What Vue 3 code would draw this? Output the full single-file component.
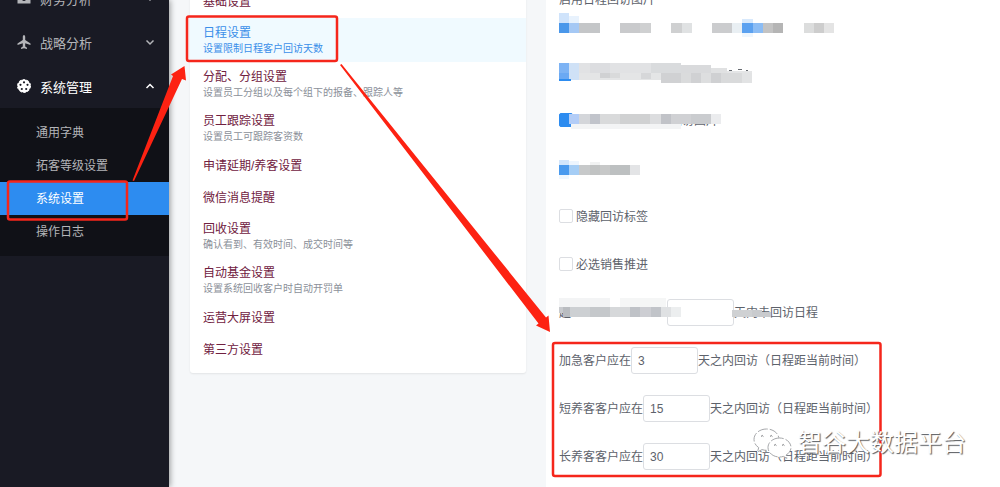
<script setup>
import { ref } from 'vue'

const subMenu = ['通用字典', '拓客等级设置', '系统设置', '操作日志']
const activeSub = ref('系统设置')

const settings = [
  { title: '基础设置' },
  { title: '日程设置', desc: '设置限制日程客户回访天数' },
  { title: '分配、分组设置', desc: '设置员工分组以及每个组下的报备、跟踪人等' },
  { title: '员工跟踪设置', desc: '设置员工可跟踪客资数' },
  { title: '申请延期/养客设置' },
  { title: '微信消息提醒' },
  { title: '回收设置', desc: '确认看到、有效时间、成交时间等' },
  { title: '自动基金设置', desc: '设置系统回收客户时自动开罚单' },
  { title: '运营大屏设置' },
  { title: '第三方设置' }
]
const activeSetting = ref('日程设置')

// Mosaic tiles: x, y, width, height, colour, relative to their row
const tilesA = [
  [0, 13, 10, 10, '#cfe3fb'], [10, 16, 10, 7, '#e8f2fd'],
  [0, 23, 10, 10, '#4a97ea'], [10, 23, 10, 10, '#a5c8f4'], [20, 23, 21, 10, '#c4c6c8'],
  [61, 23, 20, 10, '#c9cacc'], [81, 23, 11, 10, '#cfd0d1'],
  [112, 23, 11, 10, '#cfd0d1'], [123, 23, 10, 10, '#e0e2e3'],
  [153, 23, 20, 10, '#cbccce'], [173, 23, 10, 10, '#e9eff3'],
  [183, 19, 11, 4, '#d8e9fc'], [183, 23, 11, 10, '#5ba1f0'], [194, 23, 10, 10, '#8bbcf4'], [183, 33, 11, 4, '#eef6fe'],
  [204, 23, 10, 10, '#c3c3c3'], [214, 23, 10, 10, '#b5b5b5'],
  [245, 23, 10, 10, '#dcdddd'], [255, 23, 10, 10, '#cdcdcd'], [265, 23, 10, 10, '#e4e4e4']
]
const tilesB = [
  [0, 15, 10, 10, '#7db3f4'], [10, 15, 10, 17, '#cfe1f6'], [0, 25, 10, 6, '#6ba9f3'], [0, 31, 12, 2, '#2d8cf0'],
  [20, 15, 102, 10, '#e1e2e4'], [20, 25, 82, 7, '#e4e5e6'], [31, 15, 20, 10, '#dcdde0'], [92, 15, 30, 10, '#d9dbdd'],
  [41, 25, 10, 5, '#d0d1d3'], [51, 25, 10, 5, '#d9dadb'], [82, 25, 10, 6, '#d6d7d9'],
  [122, 17, 30, 8, '#d9dadc'], [152, 20, 16, 5, '#e0e1e2'], [168, 23, 25, 2, '#e4e5e6'],
  [102, 25, 20, 10, '#d0d1d3'], [122, 25, 10, 10, '#dadbdc'], [132, 25, 10, 10, '#d0d1d3'],
  [142, 25, 10, 10, '#dddedf'], [152, 25, 10, 10, '#cfd0d2'], [162, 25, 21, 10, '#d9dadb'], [183, 25, 10, 10, '#e2e3e4'],
  [170, 22, 3, 1, '#666a70'], [179, 21, 4, 1, '#666a70'], [187, 22, 2, 1, '#666a70']
]
const tilesC = [
  [10, 18, 10, 10, '#b3cdf7'], [20, 18, 11, 10, '#d4d6da'], [31, 18, 10, 10, '#c1c4cb'],
  [41, 18, 20, 10, '#d9dadb'], [61, 18, 30, 10, '#d0d1d2'], [91, 18, 11, 10, '#dcdddf'],
  [102, 18, 10, 10, '#c1c3c8'], [112, 18, 20, 10, '#d0d1d4'], [132, 18, 20, 10, '#cacccf'], [152, 18, 10, 10, '#ebecee'],
  [12, 28, 110, 5, '#f3f4f5']
]
const tilesD = [
  [0, 16, 10, 5, '#d2e6fc'], [10, 17, 10, 4, '#edf5fe'], [0, 21, 10, 10, '#4a9aee'], [0, 31, 10, 4, '#f0f7fe'],
  [10, 21, 10, 10, '#a5cdf5'], [20, 21, 11, 10, '#c7c9ca'], [31, 21, 10, 10, '#c1c3c3'], [41, 21, 10, 10, '#c7c8c8'],
  [51, 21, 20, 10, '#bdc0c1'], [71, 21, 10, 10, '#e3e4e6'], [31, 18, 10, 3, '#f1f2f2']
]
const tilesE = [
  [0, 10, 51, 9, '#f3f4f5'], [61, 10, 46, 9, '#f5f6f6'],
  [4, 19, 7, 10, '#b9bcc0'], [11, 19, 20, 10, '#cdd0d3'], [0, 19, 4, 6, '#c8cace'], [31, 19, 20, 10, '#c5c8cb'], [51, 19, 20, 10, '#d6d8da'],
  [71, 19, 10, 10, '#bfc2c7'], [81, 19, 11, 10, '#cdced3'], [92, 19, 10, 10, '#c1c4c9'], [102, 19, 10, 10, '#dfe1e3'], [112, 19, 10, 10, '#eceeef'],
  [173, 22, 20, 7, '#cfd1d3'], [193, 22, 10, 7, '#c9cbce'], [203, 24, 9, 5, '#c9cbce']
]
const hiddenRows = [
  { name: 'a', tiles: tilesA },
  { name: 'b', tiles: tilesB },
  { name: 'c', tiles: tilesC, checked: true, tail: '回访图片' },
  { name: 'd', tiles: tilesD }
]
const checks = ref([
  { id: 'hide-tag', label: '隐藏回访标签', on: false },
  { id: 'must-push', label: '必选销售推进', on: false }
])
const limits = ref([
  { id: 'urgent', label: '加急客户应在', value: '3' },
  { id: 'short', label: '短养客客户应在', value: '15' },
  { id: 'long', label: '长养客客户应在', value: '30' }
])
</script>

<template>
  <div class="page">
    <aside class="sidebar">
      <nav>
        <button class="group" type="button">
          <svg class="icon" viewBox="0 0 16 16"><path fill="currentColor" d="M5 2h6v2h3.500v9.500h-13V4H5z" /><circle cx="8" cy="9" r="2" fill="#191a24" /></svg>
          <span>财务分析</span>
          <svg class="chevron" viewBox="0 0 10 10"><path d="M1.500 3.500 5 7l3.500-3.500" /></svg>
        </button>
        <button class="group" type="button">
          <svg class="icon" viewBox="0 0 16 16"><path fill="currentColor" d="M8 1c.8 0 1.200 1 1.200 2v3l5.300 3.400V11L9.200 9.300v3.200l1.800 1.300V15l-3-.8-3 .8v-1.200l1.800-1.300V9.300L1.500 11V9.400L6.800 6V3c0-1 .4-2 1.200-2z" /></svg>
          <span>战略分析</span>
          <svg class="chevron" viewBox="0 0 10 10"><path d="M1.500 3.500 5 7l3.500-3.500" /></svg>
        </button>
        <button class="group open" type="button" aria-expanded="true">
          <svg class="icon" viewBox="0 0 16 16">
            <circle cx="8" cy="8" r="6.500" fill="currentColor" stroke="currentColor" stroke-dasharray="2.500 1.580" />
            <g fill="#191a24"><circle cx="8" cy="4.300" r="1.100" /><circle cx="11.500" cy="6.800" r="1.100" /><circle cx="10.200" cy="11" r="1.100" /><circle cx="5.800" cy="11" r="1.100" /><circle cx="4.500" cy="6.800" r="1.100" /></g>
          </svg>
          <span>系统管理</span>
          <svg class="chevron" viewBox="0 0 10 10"><path d="M1.500 7 5 3.500 8.500 7" /></svg>
        </button>
        <div class="submenu">
          <a v-for="s in subMenu" :key="s" href="#" :class="{ active: s === activeSub }" @click.prevent="activeSub = s">{{ s }}</a>
        </div>
      </nav>
    </aside>

    <main class="content">
      <section class="list">
        <a
          v-for="s in settings" :key="s.title" href="#" class="entry"
          :class="{ active: s.title === activeSetting, single: !s.desc }"
          @click.prevent="activeSetting = s.title"
        >
          <span class="title">{{ s.title }}</span>
          <span v-if="s.desc" class="desc">{{ s.desc }}</span>
        </a>
      </section>

      <form class="panel" @submit.prevent>
        <p class="heading">启用日程回访图片</p>
        <div v-for="r in hiddenRows" :key="r.name" class="row">
          <input v-if="r.checked" type="checkbox" class="box" checked :aria-label="r.tail">
          <span v-if="r.tail" class="tail">{{ r.tail }}</span>
          <svg class="mosaic" width="300" height="48" shape-rendering="crispEdges" aria-hidden="true">
            <rect v-for="(t, i) in r.tiles" :key="i" :x="t[0]" :y="t[1]" :width="t[2]" :height="t[3]" :fill="t[4]" />
          </svg>
        </div>
        <div v-for="c in checks" :key="c.id" class="row">
          <input :id="c.id" v-model="c.on" type="checkbox" class="box">
          <label :for="c.id" class="check-label">{{ c.label }}</label>
        </div>
        <div class="row">
          <label for="overdue" class="covered">超</label>
          <input id="overdue" type="text" class="field">
          <span>天内未回访日程</span>
          <svg class="mosaic" width="300" height="48" shape-rendering="crispEdges" aria-hidden="true">
            <rect v-for="(t, i) in tilesE" :key="i" :x="t[0]" :y="t[1]" :width="t[2]" :height="t[3]" :fill="t[4]" />
          </svg>
        </div>
        <div v-for="l in limits" :key="l.id" class="row">
          <label :for="l.id">{{ l.label }}</label>
          <input :id="l.id" v-model="l.value" type="text" class="field">
          <span>天之内回访（日程距当前时间）</span>
        </div>
      </form>
    </main>

    <svg class="marks" width="1000" height="487" viewBox="0 0 1000 487" aria-hidden="true">
      <g fill="none" stroke="#f5261b" stroke-width="2.500">
        <rect x="187" y="16.500" width="150" height="44.500" rx="2" />
        <rect x="8" y="181.500" width="119" height="38" rx="2" />
        <rect x="553" y="343" width="327.500" height="133" rx="2" />
      </g>
      <path fill="#fd2212" d="M132.500 180.500 173 76l-2-1.500L184.500 66l1.500 14.500-4-1.500L134 181z" />
      <path fill="#fd2212" d="M340 65 341.500 64 546 317.500l2.500-2 1.500 16.500-14-6.500 2.500-2z" />
    </svg>

    <div class="watermark">
      <svg width="40" height="32" viewBox="0 0 40 32" aria-hidden="true">
        <g fill="#fff" stroke="#a5a7aa" stroke-width="1" stroke-dasharray="9 2">
          <path d="M14.500 2C7.500 2 2 6.600 2 12.500c0 3.400 1.800 6.200 4.700 8.100L5.500 25l4.500-2.400c1.500.5 3 .7 4.500.7C21.500 23.300 27 18.500 27 12.500S21.500 2 14.500 2z" />
          <path d="M27.500 11C21.200 11 16 15.200 16 20.500S21.200 30 27.500 30c1.400 0 2.700-.2 3.900-.6l3.600 2-1-3.300c2.900-1.700 5-4.500 5-7.600C39 15.200 33.800 11 27.500 11z" />
        </g>
        <g fill="none" stroke="#77797c"><path d="M9 9.500q1.200-2 2.400 0M18 9.500q1.200-2 2.400 0M22 18.500q1.200-2 2.400 0M30 18.500q1.200-2 2.400 0" /></g>
      </svg>
      <span>智谷大数据平台</span>
    </div>
  </div>
</template>

<style>
body {
  margin: 0;
  background: #f5f7f9;
}
</style>

<style scoped>
.page {
  position: relative;
  display: flex;
  min-height: 100vh;
  overflow: hidden;
  background: #f5f7f9;
  color: #5d626b;
  font-family: "Liberation Sans", "Noto Sans CJK SC", sans-serif;
  font-size: 12px;
  white-space: nowrap;
}
a {
  color: inherit;
  text-decoration: none;
}
.sidebar {
  flex: 0 0 169px;
  background: #191a24;
  box-shadow: 1px 0 6px rgba(0, 0, 0, 0.4);
}
nav {
  margin-top: -24px;
}
.group {
  display: flex;
  align-items: center;
  width: 100%;
  height: 44px;
  padding: 0 14px 0 16px;
  border: 0;
  background: none;
  color: #b4b5b9;
  font: inherit;
  font-size: 13px;
}
.group.open {
  color: #fff;
}
.group span {
  flex: 1;
  text-align: left;
}
.icon {
  width: 16px;
  height: 16px;
  margin-right: 8px;
}
.chevron {
  width: 10px;
  height: 10px;
  fill: none;
  stroke: currentColor;
  stroke-width: 1.500;
}
.submenu {
  padding: 8px 0;
  background: #101117;
}
.submenu a {
  display: block;
  padding: 2px 0 0 36px;
  color: #b4b5b9;
  line-height: 31px;
}
.submenu a.active {
  background: #2d8cf0;
  color: #fff;
}
.content {
  flex: 1;
  display: grid;
  grid-template-columns: 336px 1fr;
  gap: 20px;
  align-items: start;
  padding-left: 21px;
}
.list {
  margin-top: -14px;
  padding-bottom: 7px;
  border-radius: 3px;
  background: #fff;
  box-shadow: 0 1px 2px rgba(0, 0, 0, 0.08);
}
.entry {
  display: block;
  padding: 6px 13px;
}
.entry.single {
  padding: 7px 13px;
}
.title,
.desc {
  display: block;
}
.title {
  color: #702040;
  line-height: 18px;
}
.desc {
  color: #8b9099;
  font-size: 10px;
  line-height: 14px;
}
.entry.active {
  background: #f0faff;
}
.entry.active .title,
.entry.active .desc {
  color: #3b8fe9;
}
.panel {
  min-height: 100vh;
  padding-left: 13px;
  background: #fff;
}
.heading {
  margin: -8px 0;
  line-height: 16px;
}
.row {
  position: relative;
  display: flex;
  align-items: center;
  height: 48px;
}
.row span,
.row label {
  padding-bottom: 2px;
}
.mosaic {
  position: absolute;
  top: 0;
  left: 0;
  pointer-events: none;
}
.box {
  appearance: none;
  width: 14px;
  height: 14px;
  margin: 0;
  border: 1px solid #dcdee2;
  border-radius: 2px;
  background: #fff;
}
.box:checked {
  border-color: #2d8cf0;
  background: #2d8cf0;
}
.check-label {
  margin-left: 3px;
}
.tail {
  margin-left: 97px;
}
.covered {
  width: 108px;
}
.field {
  box-sizing: border-box;
  width: 67px;
  height: 27px;
  padding: 2px 6px 0;
  border: 1px solid #dcdee2;
  border-radius: 3px;
  background: #fff;
  color: #5d626b;
  font: inherit;
}
.marks {
  position: absolute;
  top: 0;
  left: 0;
  pointer-events: none;
}
.watermark {
  position: absolute;
  right: 34px;
  bottom: 26px;
  display: flex;
  align-items: center;
  gap: 6px;
  color: #fff;
  font-size: 24px;
  line-height: 36px;
  text-shadow: 1px 1px 1px #55585c;
  pointer-events: none;
}
</style>
